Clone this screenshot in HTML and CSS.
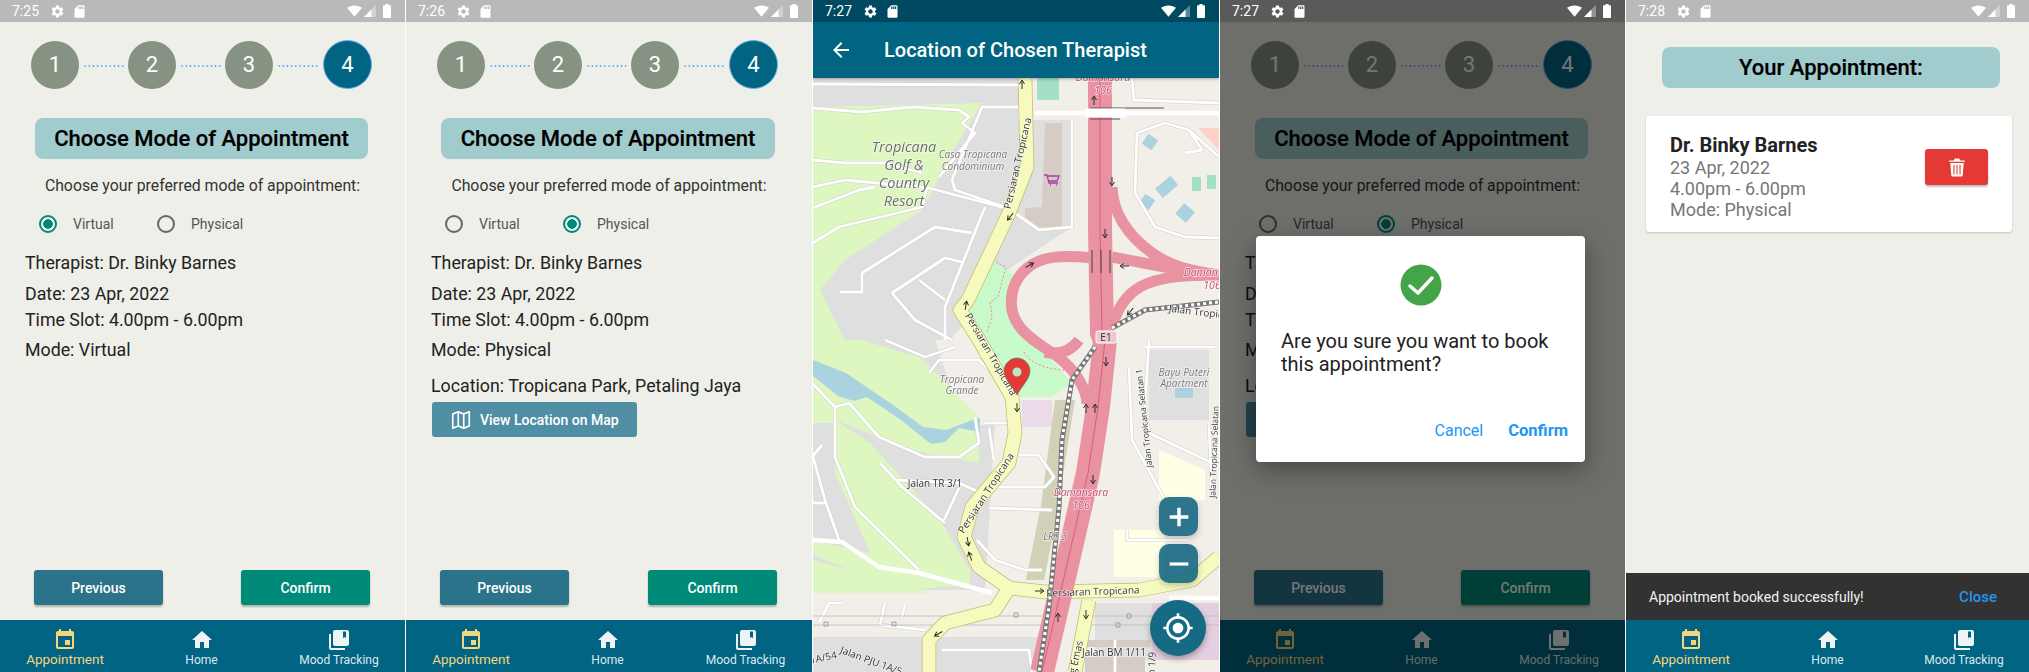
FILE: index.html
```html
<!DOCTYPE html>
<html lang="en">
<head>
    <meta charset="UTF-8">
    <title>Appointment booking screens</title>
    <link rel="stylesheet" href="styles.css">
</head>
<body>
    <svg class="icon-defs" width="0" height="0">
        <symbol id="i-gear" viewBox="0 0 24 24"><path d="M19.14 12.94c.04-.3.06-.61.06-.94 0-.32-.02-.64-.07-.94l2.03-1.58c.18-.14.23-.41.12-.61l-1.92-3.32c-.12-.22-.37-.29-.59-.22l-2.39.96c-.5-.38-1.03-.7-1.62-.94l-.36-2.54c-.04-.24-.24-.41-.48-.41h-3.84c-.24 0-.43.17-.47.41l-.36 2.54c-.59.24-1.13.57-1.62.94l-2.39-.96c-.22-.08-.47 0-.59.22L2.74 8.87c-.12.21-.08.47.12.61l2.03 1.58c-.05.3-.09.63-.09.94s.02.64.07.94l-2.03 1.58c-.18.14-.23.41-.12.61l1.92 3.32c.12.22.37.29.59.22l2.39-.96c.5.38 1.03.7 1.62.94l.36 2.54c.05.24.24.41.48.41h3.84c.24 0 .44-.17.47-.41l.36-2.54c.59-.24 1.13-.56 1.62-.94l2.39.96c.22.08.47 0 .59-.22l1.92-3.32c.12-.22.07-.47-.12-.61l-2.01-1.58zM12 15.6c-1.98 0-3.6-1.62-3.6-3.6s1.62-3.6 3.6-3.6 3.6 1.62 3.6 3.6-1.62 3.6-3.6 3.6z"/></symbol>
        <symbol id="i-sd" viewBox="0 0 24 24"><path d="M18 2h-8L4.02 8 4 20c0 1.1.9 2 2 2h12c1.1 0 2-.9 2-2V4c0-1.1-.9-2-2-2zm-6 6h-2V4h2v4zm3 0h-2V4h2v4zm3 0h-2V4h2v4z"/></symbol>
        <symbol id="i-wifi" viewBox="0 0 16 12"><path d="M8 12 0 2.6C2 1 4.8 0 8 0s6 1 8 2.6z"/></symbol>
        <symbol id="i-signal" viewBox="0 0 12 12"><path opacity=".35" d="M12 0v12H0z"/><path d="M7.5 4.5V12H0z"/></symbol>
        <symbol id="i-battery" viewBox="0 0 8 14"><path d="M2.4 0h3.2v1.2H7c.6 0 1 .4 1 1V13c0 .6-.4 1-1 1H1c-.6 0-1-.4-1-1V2.200c0-.6.4-1 1-1h1.400z"/></symbol>
        <symbol id="i-event" viewBox="0 0 24 24"><path d="M17 12h-5v5h5v-5zM16 1v2H8V1H6v2H5c-1.110 0-1.990.9-1.990 2L3 19c0 1.100.89 2 2 2h14c1.100 0 2-.9 2-2V5c0-1.100-.9-2-2-2h-1V1h-2zm3 18H5V8h14v11z"/></symbol>
        <symbol id="i-home" viewBox="0 0 24 24"><path d="M10 20v-6h4v6h5v-8h3L12 3 2 12h3v8z"/></symbol>
        <symbol id="i-book" viewBox="0 0 24 24"><path d="M4 6H2v14c0 1.100.9 2 2 2h14v-2H4V6z"/><path fill-rule="evenodd" d="M20 2H8c-1.100 0-2 .9-2 2v12c0 1.100.9 2 2 2h12c1.100 0 2-.9 2-2V4c0-1.100-.9-2-2-2zM19 3.500v6.500l-1.500-1.100-1.500 1.100V3.500z"/></symbol>
        <symbol id="i-map" viewBox="0 0 24 24"><path fill="none" stroke="currentColor" stroke-width="1.800" stroke-linejoin="round" d="M3 5.500 9 3l6 2.500L21 3v15.500L15 21l-6-2.500L3 21zM9 3v15.500M15 5.500V21"/></symbol>
    </svg>

    <div class="board">

        <!-- virtual mode -->
        <div class="screen">
            <div class="status-bar">
                <span class="clock">7:25</span>
                <svg class="st-icon st-gear"><use href="#i-gear"/></svg>
                <svg class="st-icon st-sd"><use href="#i-sd"/></svg>
                <span class="st-right">
                    <svg class="st-wifi"><use href="#i-wifi"/></svg>
                    <svg class="st-signal"><use href="#i-signal"/></svg>
                    <svg class="st-battery"><use href="#i-battery"/></svg>
                </span>
            </div>
            <div class="content">
                <div class="stepper">
                    <span class="step">1</span><span class="dots"></span>
                    <span class="step">2</span><span class="dots"></span>
                    <span class="step">3</span><span class="dots"></span>
                    <span class="step step-active">4</span>
                </div>
                <h2 class="pill">Choose Mode of Appointment</h2>
                <p class="prompt">Choose your preferred mode of appointment:</p>
                <div class="radios">
                    <div class="radio-item"><span class="radio radio-on"></span>Virtual</div>
                    <div class="radio-item"><span class="radio"></span>Physical</div>
                </div>
                <div class="details">
                    <p class="d-therapist">Therapist: Dr. Binky Barnes</p>
                    <p class="d-date">Date: 23 Apr, 2022</p>
                    <p class="d-time">Time Slot: 4.00pm - 6.00pm</p>
                    <p class="d-mode">Mode: Virtual</p>
                </div>
                <div class="actions">
                    <button class="btn btn-prev">Previous</button>
                    <button class="btn btn-confirm">Confirm</button>
                </div>
            </div>
            <div class="tabbar">
                <div class="tab tab-active"><svg><use href="#i-event"/></svg><span>Appointment</span></div>
                <div class="tab"><svg><use href="#i-home"/></svg><span>Home</span></div>
                <div class="tab"><svg><use href="#i-book"/></svg><span>Mood Tracking</span></div>
            </div>
        </div>

        <!-- physical mode -->
        <div class="screen">
            <div class="status-bar">
                <span class="clock">7:26</span>
                <svg class="st-icon st-gear"><use href="#i-gear"/></svg>
                <svg class="st-icon st-sd"><use href="#i-sd"/></svg>
                <span class="st-right">
                    <svg class="st-wifi"><use href="#i-wifi"/></svg>
                    <svg class="st-signal"><use href="#i-signal"/></svg>
                    <svg class="st-battery"><use href="#i-battery"/></svg>
                </span>
            </div>
            <div class="content">
                <div class="stepper">
                    <span class="step">1</span><span class="dots"></span>
                    <span class="step">2</span><span class="dots"></span>
                    <span class="step">3</span><span class="dots"></span>
                    <span class="step step-active">4</span>
                </div>
                <h2 class="pill">Choose Mode of Appointment</h2>
                <p class="prompt">Choose your preferred mode of appointment:</p>
                <div class="radios">
                    <div class="radio-item"><span class="radio"></span>Virtual</div>
                    <div class="radio-item"><span class="radio radio-on"></span>Physical</div>
                </div>
                <div class="details">
                    <p class="d-therapist">Therapist: Dr. Binky Barnes</p>
                    <p class="d-date">Date: 23 Apr, 2022</p>
                    <p class="d-time">Time Slot: 4.00pm - 6.00pm</p>
                    <p class="d-mode">Mode: Physical</p>
                    <p class="d-location">Location: Tropicana Park, Petaling Jaya</p>
                    <button class="btn btn-map"><svg><use href="#i-map"/></svg>View Location on Map</button>
                </div>
                <div class="actions">
                    <button class="btn btn-prev">Previous</button>
                    <button class="btn btn-confirm">Confirm</button>
                </div>
            </div>
            <div class="tabbar">
                <div class="tab tab-active"><svg><use href="#i-event"/></svg><span>Appointment</span></div>
                <div class="tab"><svg><use href="#i-home"/></svg><span>Home</span></div>
                <div class="tab"><svg><use href="#i-book"/></svg><span>Mood Tracking</span></div>
            </div>
        </div>

        <!-- map -->
        <div class="screen">
            <div class="status-bar status-dark">
                <span class="clock">7:27</span>
                <svg class="st-icon st-gear"><use href="#i-gear"/></svg>
                <svg class="st-icon st-sd"><use href="#i-sd"/></svg>
                <span class="st-right">
                    <svg class="st-wifi"><use href="#i-wifi"/></svg>
                    <svg class="st-signal"><use href="#i-signal"/></svg>
                    <svg class="st-battery"><use href="#i-battery"/></svg>
                </span>
            </div>
            <div class="appbar">
                <svg viewBox="0 0 24 24" class="back"><path d="M20 11H7.830l5.590-5.590L12 4l-8 8 8 8 1.410-1.410L7.830 13H20v-2z"/></svg>
                <span>Location of Chosen Therapist</span>
            </div>
            <div class="map-wrap">
                <svg class="map" viewBox="813 78 406 594" preserveAspectRatio="none">
                    <defs>
                        <g id="minor-roads">
                            <path d="M813 84 1019 85M813 108l49 4 50-5 47 3 10 7-7 6 13 10-36 44M813 160l32 3h40l37 10M813 187l32-7 84 8 76 20M813 208l46-18 16-3M813 243l26-16 83-20 5-19M952 180l30-73h37l1 16M952 180l3 10 50 17"/>
                            <path d="M862 293v-20l73-46 37 6M985 207l-40 100v33M892 293l53-35 17 4M892 293l23 27 37 20M919 280l26 20M840 292h22M1015 213l24 17 33-3V120"/>
                            <path d="M1137 133l28-10 24 7 30 27M1137 133l-2 60 20 34 30 10 34 1M1189 130l13 20-17 3M1132 78l2 22 85 3"/>
                            <path d="M812 383l23 24 14-4 30 34 46 20h34l20-14-4-26M885 340l40 17 30-10M929 373l10-13h40l23 23M985 423h24M989 428l5 32M880 463l22 24 43 36M895 480l64 3 20 9M959 488l-15 32"/>
                            <path d="M989 487h56l9-10-15-22h-20M989 508l63 2M977 540l18 20 30 10h17M812 453l13 47 14 40M835 407v50l20 50 64 63M812 503h13M812 457l10-12"/>
                            <path d="M1149 340l-4 67 4 26 63 30M1129 367l3 73 33 60M1209 423l3 74M1127 530v10h62M1145 347h70M942 650h87l3 22M819 623l10-20h13M885 603l-5 22 45 5M905 605l-3 12M1115 640v32"/>
                        </g>
                        <g id="ramps">
                            <path d="M1092 258c-30-3-48-2-62 8-14 10-21 26-18 44 3 16 16 27 33 38 14 9 26 18 34 32 6 10 8 18 8 24"/>
                            <path d="M1112 257l53 10 54 8M1112 187c1 28 18 50 40 66 20 14 40 18 67 22M1112 327c5-18 14-32 28-40 20-11 48-12 79-12M1045 352c14 3 26-1 34-12"/>
                        </g>
                        <path id="motorway" d="M1100 78v150l2 105 3 7-7 67-10 66-23 100-23 99"/>
                        <path id="trunk" d="M1025 78l2 89-18 46-41 87-8 10 19 30 33 57 3 36-6 30-37 44-8 30 15 30 30 21 36 4 94-2 53-10 27-23"/>
                        <path id="trunk-sw" d="M1009 588l-14 22-50 13-16 17v32M1089 600l-14 72"/>
                        <path id="rail" d="M1112 328l33-18 74-8M1095 347l-23 33-10 60-3 67-10 100-10 65"/>
                        <path id="arrow" d="M-5 0H3M0-2.500 4 0 0 2.500"/>
                    </defs>

                    <rect class="m-land" x="813" y="78" width="406" height="594"/>
                    <path class="m-grey" d="M813 78h214l3 42h42v107l-62 41-25 32-35 40-15 0 20 60v25h40l-10 165H813z"/>
                    <rect class="m-land" x="813" y="598" width="190" height="39"/>
                    <path class="m-grey" d="M813 637h229l-10 35H813zM1095 603h124v57h-124zM1149 350h60v70h-60z"/>
                    <path class="m-golf" d="M813 107l169-4-23 37-37 70-77 50-25 30 25 50-33 0zM813 340h47l60 17 59 60v46l-109-20 70 77 30 50v15l-70 5-87-35zM813 560l122 33H813z"/>
                    <path class="m-grey" d="M813 423h22v50l35 80-57-12zM835 420l44 17 46 20 54 6-109-20-35-23z"/>
                    <path class="m-park" d="M994 262l21 13-3 35 8 25 25 17 27 31-20 14h-37l-40-67-10-20z"/>
                    <path class="m-water" d="M813 360l33 13 50 34 27 20 23 3 29-11 5-1v14l-21-4-14 14-14 2-30-24-34-23-13 4-16-5-25-20z"/>
                    <rect class="m-lilac" x="1022" y="400" width="30" height="27"/>
                    <rect class="m-lilac m-lilac-2" x="1152" y="603" width="67" height="57"/>
                    <path class="m-rail-strip" d="M1055 400h20l-8 50-15 90-8 40h-18l15-75z"/>
                    <path class="m-yellow-lot" d="M1159 450l46 20v30h-46zM1114 530h51v47h-51z"/>
                    <rect class="m-mint" x="1037" y="78" width="22" height="22"/>
                    <path class="m-bldg" d="M1045 123h17v105l-23-1-14-10v-9l17-1z"/>
                    <path class="m-bldg" d="M1085 640h65v7h-65zM1085 657h60v15h-60z"/>
                    <rect class="m-water" x="1144" y="136" width="12" height="12" transform="rotate(35 1150 142)"/>
                    <rect class="m-water" x="1157" y="180" width="20" height="12" transform="rotate(-40 1168 187)"/>
                    <rect class="m-water" x="1141" y="196" width="12" height="12" transform="rotate(35 1147 202)"/>
                    <rect class="m-water" x="1178" y="206" width="14" height="14" transform="rotate(40 1185 213)"/>
                    <rect class="m-water" x="1175" y="388" width="18" height="10"/>
                    <rect class="m-mint" x="1192" y="177" width="9" height="14"/>
                    <rect class="m-mint" x="1207" y="175" width="9" height="14"/>
                    <path class="m-rose" d="M1198 128h21v22z"/>
                    <path class="m-dash-park" d="M996 262l10 5-8 30-8 5 2 15-5 15M1024 352c5 10 20 17 40 18-2-10-10-20-22-26"/>

                    <use href="#minor-roads" class="m-minor-case"/>
                    <use href="#minor-roads" class="m-minor"/>
                    <path class="m-wide" d="M812 540l30 2 37 25 40 6 73 20M1169 598h50M1035 113h184"/>
                    <path class="m-pline" d="M813 616h240M813 625h240M1080 616h139M1080 625h139"/>
                    <path class="m-pole" d="M824 622h4v4h-4zM892 622h4v4h-4zM1014 613h4v4h-4zM1127 614h4v4h-4zM1116 623h4v4h-4z"/>

                    <use href="#trunk" class="m-trunk-case"/>
                    <use href="#trunk-sw" class="m-trunk-case"/>
                    <use href="#trunk" class="m-trunk"/>
                    <use href="#trunk-sw" class="m-trunk"/>
                    <use href="#ramps" class="m-ramp"/>
                    <use href="#motorway" class="m-motor"/>
                    <use href="#motorway" class="m-motor-line"/>
                    <use href="#rail" class="m-rail"/>
                    <use href="#rail" class="m-rail-ties"/>
                    <path class="m-bridge" d="M1090 108h74M1090 119h30M1092 250v23M1101 250v23M1110 250v23"/>
                    <path class="m-wide m-wide-over" d="M1085 113h40"/>

                    <g class="m-arrows">
                        <use href="#arrow" transform="translate(1022 84) rotate(-90)"/>
                        <use href="#arrow" transform="translate(1094 100) rotate(-90)"/>
                        <use href="#arrow" transform="translate(1112 182) rotate(90)"/>
                        <use href="#arrow" transform="translate(1105 234) rotate(90)"/>
                        <use href="#arrow" transform="translate(1124 266) rotate(180)"/>
                        <use href="#arrow" transform="translate(1030 265) rotate(-30)"/>
                        <use href="#arrow" transform="translate(1010 217) rotate(130)"/>
                        <use href="#arrow" transform="translate(966 305) rotate(-80)"/>
                        <use href="#arrow" transform="translate(1130 312) rotate(130)"/>
                        <use href="#arrow" transform="translate(1106 362) rotate(90)"/>
                        <use href="#arrow" transform="translate(1086 408) rotate(-90)"/>
                        <use href="#arrow" transform="translate(1095 408) rotate(-90)"/>
                        <use href="#arrow" transform="translate(1093 480) rotate(90)"/>
                        <use href="#arrow" transform="translate(1017 408) rotate(90)"/>
                        <use href="#arrow" transform="translate(968 542) rotate(80)"/>
                        <use href="#arrow" transform="translate(970 556) rotate(-110)"/>
                        <use href="#arrow" transform="translate(1040 591)"/>
                        <use href="#arrow" transform="translate(1058 617) rotate(-90)"/>
                        <use href="#arrow" transform="translate(1086 615) rotate(90)"/>
                        <use href="#arrow" transform="translate(938 634) rotate(150)"/>
                    </g>
                    <path class="m-cart" d="M1044 175h3l2 8h9M1048 176h11l-2 5h-8M1050 185h1M1056 185h1"/>

                    <text class="m-name m-big" x="904" y="152">Tropicana</text>
                    <text class="m-name m-big" x="904" y="170">Golf &amp;</text>
                    <text class="m-name m-big" x="904" y="188">Country</text>
                    <text class="m-name m-big" x="904" y="206">Resort</text>
                    <text class="m-name" x="973" y="158">Casa Tropicana</text>
                    <text class="m-name" x="973" y="170">Condominium</text>
                    <text class="m-name" x="962" y="383">Tropicana</text>
                    <text class="m-name" x="962" y="394">Grande</text>
                    <text class="m-name" x="1184" y="376">Bayu Puteri</text>
                    <text class="m-name" x="1184" y="387">Apartment</text>
                    <text class="m-name" x="1055" y="540">LRT 3</text>
                    <text class="m-motor-name" x="1103" y="81">Damansara</text>
                    <text class="m-motor-name" x="1103" y="94">106</text>
                    <text class="m-motor-name" x="1211" y="276">Damansara</text>
                    <text class="m-motor-name" x="1212" y="289">106</text>
                    <text class="m-motor-name" x="1081" y="496">Damansara</text>
                    <text class="m-motor-name" x="1081" y="509">106</text>
                    <text class="m-road" transform="translate(1021 164) rotate(-77)">Persiaran Tropicana</text>
                    <text class="m-road" transform="translate(988 356) rotate(60)">Persiaran Tropicana</text>
                    <text class="m-road" transform="translate(989 495) rotate(-57)">Persiaran Tropicana</text>
                    <text class="m-road" transform="translate(1093 595) rotate(-2)">Persiaran Tropicana</text>
                    <text class="m-road" transform="translate(1204 316) rotate(7)">Jalan Tropicana</text>
                    <text class="m-road m-road-sm" transform="translate(1147 418) rotate(-96)">Jalan Tropicana Selatan 1</text>
                    <text class="m-road m-road-sm" transform="translate(1217 452) rotate(-88)">Jalan Tropicana Selatan</text>
                    <text class="m-road" x="935" y="487">Jalan TR 3/1</text>
                    <text class="m-road" x="1114" y="656">Jalan BM 1/11</text>
                    <text class="m-road" transform="translate(1076 672) rotate(-77)">Lintang Emas</text>
                    <text class="m-road" transform="translate(824 661) rotate(-12)">1A/54</text>
                    <text class="m-road" transform="translate(870 664) rotate(20)">Jalan PJU 1A/5</text>
                    <text class="m-road" transform="translate(1155 672) rotate(-88)">Jalan 1/9</text>

                    <rect class="m-shield-fill" x="1096" y="331" width="21" height="12" rx="2"/>
                    <text class="m-shield-text" x="1106" y="341">E1</text>

                    <path class="m-pin" d="M1017 358c-7 0-13 6-13 13 0 8 9 16 13 24 4-8 13-16 13-24 0-7-6-13-13-13z"/>
                    <circle class="m-pin-hole" cx="1017" cy="372" r="4.500"/>
                </svg>
                <div class="zoom-btn zoom-plus">
                    <svg viewBox="0 0 24 24"><path d="M19 13.300h-5.700V19h-2.600v-5.700H5v-2.600h5.700V5h2.600v5.700H19z"/></svg>
                </div>
                <div class="zoom-btn zoom-minus">
                    <svg viewBox="0 0 24 24"><path d="M5 10.800h14v2.400H5z"/></svg>
                </div>
                <div class="locate">
                    <svg viewBox="0 0 24 24"><path d="M12 8c-2.210 0-4 1.790-4 4s1.790 4 4 4 4-1.790 4-4-1.790-4-4-4zm8.940 3c-.46-4.170-3.770-7.480-7.940-7.940V1h-2v2.060C6.830 3.520 3.520 6.830 3.060 11H1v2h2.060c.46 4.170 3.770 7.480 7.940 7.940V23h2v-2.060c4.170-.46 7.480-3.770 7.940-7.940H23v-2h-2.060zM12 19c-3.870 0-7-3.130-7-7s3.130-7 7-7 7 3.130 7 7-3.130 7-7 7z"/></svg>
                </div>
            </div>
        </div>

        <!-- confirm dialog -->
        <div class="screen">
            <div class="status-bar status-dim">
                <span class="clock">7:27</span>
                <svg class="st-icon st-gear"><use href="#i-gear"/></svg>
                <svg class="st-icon st-sd"><use href="#i-sd"/></svg>
                <span class="st-right">
                    <svg class="st-wifi"><use href="#i-wifi"/></svg>
                    <svg class="st-signal"><use href="#i-signal"/></svg>
                    <svg class="st-battery"><use href="#i-battery"/></svg>
                </span>
            </div>
            <div class="content">
                <div class="stepper">
                    <span class="step">1</span><span class="dots"></span>
                    <span class="step">2</span><span class="dots"></span>
                    <span class="step">3</span><span class="dots"></span>
                    <span class="step step-active">4</span>
                </div>
                <h2 class="pill">Choose Mode of Appointment</h2>
                <p class="prompt">Choose your preferred mode of appointment:</p>
                <div class="radios">
                    <div class="radio-item"><span class="radio"></span>Virtual</div>
                    <div class="radio-item"><span class="radio radio-on"></span>Physical</div>
                </div>
                <div class="details">
                    <p class="d-therapist">Therapist: Dr. Binky Barnes</p>
                    <p class="d-date">Date: 23 Apr, 2022</p>
                    <p class="d-time">Time Slot: 4.00pm - 6.00pm</p>
                    <p class="d-mode">Mode: Physical</p>
                    <p class="d-location">Location: Tropicana Park, Petaling Jaya</p>
                    <button class="btn btn-map"><svg><use href="#i-map"/></svg>View Location on Map</button>
                </div>
                <div class="actions">
                    <button class="btn btn-prev">Previous</button>
                    <button class="btn btn-confirm">Confirm</button>
                </div>
            </div>
            <div class="tabbar">
                <div class="tab tab-active"><svg><use href="#i-event"/></svg><span>Appointment</span></div>
                <div class="tab"><svg><use href="#i-home"/></svg><span>Home</span></div>
                <div class="tab"><svg><use href="#i-book"/></svg><span>Mood Tracking</span></div>
            </div>
            <div class="scrim">
                <div class="dialog">
                    <svg class="dialog-check" viewBox="0 0 42 42">
                        <circle cx="21" cy="21" r="20.500"/>
                        <path d="M10 22l8 7 14-15"/>
                    </svg>
                    <p class="dialog-text">Are you sure you want to book this appointment?</p>
                    <div class="dialog-actions">
                        <span class="dialog-cancel">Cancel</span>
                        <span class="dialog-ok">Confirm</span>
                    </div>
                </div>
            </div>
        </div>

        <!-- booked -->
        <div class="screen">
            <div class="status-bar">
                <span class="clock">7:28</span>
                <svg class="st-icon st-gear"><use href="#i-gear"/></svg>
                <svg class="st-icon st-sd"><use href="#i-sd"/></svg>
                <span class="st-right">
                    <svg class="st-wifi"><use href="#i-wifi"/></svg>
                    <svg class="st-signal"><use href="#i-signal"/></svg>
                    <svg class="st-battery"><use href="#i-battery"/></svg>
                </span>
            </div>
            <div class="content content-booked">
                <h2 class="pill pill-booked">Your Appointment:</h2>
                <div class="card">
                    <div class="card-info">
                        <div class="card-name">Dr. Binky Barnes</div>
                        <div>23 Apr, 2022</div>
                        <div>4.00pm - 6.00pm</div>
                        <div>Mode: Physical</div>
                    </div>
                    <button class="btn btn-delete">
                        <svg viewBox="0 0 18 20"><path fill-rule="evenodd" d="M6.500 0h5l1 2H17c.6 0 1 .4 1 1v.5H0V3c0-.6.4-1 1-1h4.500zM1.500 5h15l-1 13.500c0 .8-.7 1.500-1.500 1.500H4c-.8 0-1.500-.7-1.500-1.500zM5 7v11h1.200V7zM8.400 7v11h1.200V7zM11.800 7v11H13V7z"/></svg>
                    </button>
                </div>
                <div class="snackbar">
                    <span>Appointment booked successfully!</span>
                    <span class="snack-close">Close</span>
                </div>
            </div>
            <div class="tabbar">
                <div class="tab tab-active"><svg><use href="#i-event"/></svg><span>Appointment</span></div>
                <div class="tab"><svg><use href="#i-home"/></svg><span>Home</span></div>
                <div class="tab"><svg><use href="#i-book"/></svg><span>Mood Tracking</span></div>
            </div>
        </div>

    </div>
</body>
</html>
```

FILE: styles.css
```css
/* Basic styling */
html, body {
    margin: 0;
    padding: 0;
    background: #fff;
    font-family: Roboto, sans-serif;
    overflow: hidden;
}

.icon-defs {
    position: absolute;
}

.board {
    display: grid;
    grid-template-columns: 405px 406px 406px 405px 403px;
    gap: 1px;
    height: 672px;
}

.screen {
    position: relative;
    display: flex;
    flex-direction: column;
    height: 672px;
    overflow: hidden;
    background: #efefe9;
}

/* Status bar */
.status-bar {
    display: flex;
    align-items: center;
    flex: none;
    height: 22px;
    padding: 0 14px 0 12px;
    background: #b9b9b9;
    color: #fff;
    font-size: 14px;
}

.status-dark {
    background: #004a61;
}

.status-dim {
    background: #5a5a5a;
}

.clock {
    width: 38px;
}

.st-icon {
    width: 15px;
    height: 15px;
    fill: #fff;
}

.st-sd {
    margin-left: 7px;
}

.st-right {
    display: flex;
    align-items: center;
    margin-left: auto;
    fill: #fff;
}

.st-wifi {
    width: 15px;
    height: 12px;
}

.st-signal {
    width: 12px;
    height: 12px;
    margin-left: 2px;
}

.st-battery {
    width: 8px;
    height: 14px;
    margin-left: 7px;
}

/* Form */
.content {
    display: flex;
    flex-direction: column;
    flex: 1;
    min-height: 0;
}

.stepper {
    display: flex;
    align-items: center;
    padding: 18px 0 0 31px;
}

.step {
    display: flex;
    align-items: center;
    justify-content: center;
    width: 48px;
    height: 48px;
    border-radius: 50%;
    background: #869382;
    color: #fff;
    font-size: 22px;
}

.step-active {
    width: 47px;
    height: 47px;
    margin-left: 1px;
    border: 1px solid #6ab1ea;
    background: #006482;
}

.dots {
    width: 41px;
    height: 2px;
    margin: 2px 4px 0;
    background-image: radial-gradient(circle, #4da3ff 0.9px, transparent 1px);
    background-size: 4.200px 2px;
}

.pill {
    margin: 29px 37px 0 35px;
    height: 41px;
    border-radius: 8px;
    background: #a1cccd;
    color: #000;
    font-size: 22px;
    font-weight: 500;
    line-height: 42px;
    text-align: center;
    -webkit-text-stroke: 0.2px #000;
}

.prompt {
    margin: 17px 0 0;
    color: #333;
    font-size: 15.800px;
    line-height: 20px;
    text-align: center;
}

.radios {
    display: flex;
    height: 24px;
    margin-top: 16px;
    padding-left: 39px;
}

.radio-item {
    display: flex;
    align-items: center;
    width: 118px;
    color: #555;
    font-size: 14px;
}

.radio {
    box-sizing: border-box;
    width: 18px;
    height: 18px;
    margin-right: 16px;
    border: 2px solid #666;
    border-radius: 50%;
}

.radio-on {
    border-color: #00897b;
    background: radial-gradient(circle, #00897b 4.500px, transparent 5px);
}

.details {
    padding: 15px 0 0 25px;
    color: #222;
    font-size: 17.800px;
}

.details p {
    height: 24px;
    margin: 0;
    line-height: 24px;
}

.details .d-date {
    margin-top: 7px;
}

.details .d-time {
    margin-top: 2px;
}

.details .d-mode {
    margin-top: 6px;
}

.details .d-location {
    margin-top: 12px;
}

.btn {
    border: none;
    border-radius: 3px;
    color: #fff;
    font-family: Roboto, sans-serif;
    font-size: 14px;
    font-weight: 500;
    box-shadow: 0 2px 2px rgba(0, 0, 0, 0.25);
}

.btn-map {
    display: flex;
    align-items: center;
    width: 205px;
    height: 35px;
    margin: 4px 0 0 1px;
    padding: 0 0 0 18px;
    background: #508fa3;
    box-shadow: none;
}

.btn-map svg {
    width: 22px;
    height: 22px;
    margin-right: 8px;
    color: #fff;
}

.actions {
    display: flex;
    justify-content: space-between;
    margin-top: auto;
    padding: 0 35px 15px 34px;
}

.actions .btn {
    width: 129px;
    height: 35px;
}

.btn-prev {
    background: #2a738b;
}

.btn-confirm {
    background: #008a78;
}

/* Bottom tabs */
.tabbar {
    display: grid;
    grid-template-columns: 130px 143px 1fr;
    flex: none;
    height: 52px;
    background: #006482;
}

.tab {
    display: flex;
    flex-direction: column;
    align-items: center;
    padding-top: 8px;
    fill: #f0f3f4;
    color: #dfe8ec;
    font-size: 12px;
}

.tab svg {
    width: 24px;
    height: 24px;
}

.tab span {
    margin-top: 1px;
    line-height: 15px;
    white-space: nowrap;
}

.tab-active {
    fill: #f6d57e;
    color: #f6d57e;
    font-size: 13.500px;
}

.tab-active span {
    margin-top: 0;
}

/* Map screen */
.appbar {
    display: flex;
    align-items: center;
    flex: none;
    height: 56px;
    padding-left: 16px;
    background: #006482;
    color: #fff;
    font-size: 20px;
    font-weight: 500;
    box-shadow: 0 1px 3px rgba(0, 0, 0, 0.3);
    z-index: 1;
}

.back {
    width: 24px;
    height: 24px;
    margin-right: 31px;
    fill: #fff;
}

.map-wrap {
    position: relative;
    flex: 1;
    min-height: 0;
}

.map {
    display: block;
    width: 406px;
    height: 594px;
    filter: blur(0.35px);
}

.m-land { fill: #f2efe9; }
.m-grey { fill: #e0dfdf; }
.m-golf { fill: #def6c0; }
.m-park { fill: #c8facc; }
.m-water { fill: #aad3df; }
.m-lilac { fill: #ebdbe8; }
.m-lilac-2 { fill: #e3cfe0; }
.m-rail-strip { fill: #d1d1b8; }
.m-yellow-lot { fill: #ffffe5; }
.m-mint { fill: #a3e0c6; }
.m-bldg { fill: #d6ccc6; }
.m-rose { fill: #fdd0c8; }

.m-dash-park {
    fill: none;
    stroke: #f08c8c;
    stroke-width: 1;
    stroke-dasharray: 2 2;
}

.m-minor, .m-minor-case, .m-wide, .m-pline, .m-pole, .m-trunk, .m-trunk-case,
.m-ramp, .m-motor, .m-motor-line, .m-rail, .m-rail-ties, .m-bridge {
    fill: none;
    stroke-linejoin: round;
}

.m-minor { stroke: #fff; stroke-width: 2.800; }
.m-minor-case { stroke: #cfcdca; stroke-width: 3.800; }
.m-wide { stroke: #fff; stroke-width: 4.500; }
.m-wide-over { stroke-width: 9; }
.m-pline { stroke: #b5b5b5; stroke-width: 0.700; }
.m-pole { stroke: #8f8f8f; stroke-width: 0.800; }
.m-trunk { stroke: #f7fabf; stroke-width: 13; }
.m-trunk-case { stroke: #bdbf72; stroke-width: 14.500; }
.m-ramp { stroke: #e892a2; stroke-width: 11; }
.m-motor { stroke: #e892a2; stroke-width: 24; }
.m-motor-line { stroke: #dc5c7a; stroke-width: 1; }
.m-rail { stroke: #777; stroke-width: 5; }
.m-rail-ties { stroke: #fff; stroke-width: 3; stroke-dasharray: 3 3; }
.m-bridge { stroke: #555; stroke-width: 1.200; }

.m-arrows {
    fill: none;
    stroke: #2b2b2b;
    stroke-width: 1;
}

.m-cart {
    fill: none;
    stroke: #ac39ac;
    stroke-width: 1.300;
}

.m-shield-fill { fill: #eec8d0; stroke: #fff; }

.m-shield-text {
    fill: #333;
    font-family: "Open Sans", sans-serif;
    font-size: 10px;
    text-anchor: middle;
}

.m-name {
    fill: #7a7a7a;
    font-family: "Open Sans", sans-serif;
    font-size: 10px;
    font-style: italic;
    text-anchor: middle;
    paint-order: stroke;
    stroke: rgba(255, 255, 255, 0.6);
    stroke-width: 1.500px;
}

.m-big {
    fill: #6e6e6e;
    font-size: 14.500px;
}

.m-motor-name {
    fill: #c24e6c;
    font-family: "Open Sans", sans-serif;
    font-size: 10.500px;
    font-style: italic;
    text-anchor: middle;
    paint-order: stroke;
    stroke: rgba(255, 255, 255, 0.7);
    stroke-width: 1.500px;
}

.m-road {
    fill: #333;
    font-family: "Open Sans", sans-serif;
    font-size: 10px;
    text-anchor: middle;
    paint-order: stroke;
    stroke: rgba(255, 255, 255, 0.55);
    stroke-width: 1.500px;
}

.m-road-sm {
    font-size: 8.500px;
}

.m-pin { fill: #e53935; stroke: #3f7f5a; stroke-width: 0.600; }
.m-pin-hole { fill: #b9e6c9; }

.zoom-btn {
    position: absolute;
    left: 346px;
    display: flex;
    align-items: center;
    justify-content: center;
    width: 39px;
    height: 39px;
    border-radius: 10px;
    background: rgba(0, 90, 120, 0.82);
    box-shadow: 0 3px 6px rgba(0, 0, 0, 0.2);
}

.zoom-btn svg {
    width: 32px;
    height: 32px;
    fill: #fff;
}

.zoom-plus {
    top: 419px;
}

.zoom-minus {
    top: 466px;
}

.locate {
    position: absolute;
    top: 522px;
    left: 337px;
    display: flex;
    align-items: center;
    justify-content: center;
    width: 56px;
    height: 56px;
    border-radius: 50%;
    background: #156a84;
    box-shadow: 0 3px 6px rgba(0, 0, 0, 0.3);
}

.locate svg {
    width: 32px;
    height: 32px;
    fill: #fff;
}

/* Dialog */
.scrim {
    position: absolute;
    inset: 22px 0 0;
    display: flex;
    align-items: flex-start;
    justify-content: center;
    padding-top: 214px;
    background: rgba(0, 0, 0, 0.54);
}

.dialog {
    display: flex;
    flex-direction: column;
    box-sizing: border-box;
    width: 329px;
    height: 226px;
    margin-right: 4px;
    padding: 28px 24px 0 25px;
    border-radius: 4px;
    background: #fff;
    box-shadow: 0 8px 24px rgba(0, 0, 0, 0.35);
}

.dialog-check {
    flex: none;
    align-self: center;
    width: 42px;
    height: 42px;
}

.dialog-check circle {
    fill: #43a547;
}

.dialog-check path {
    fill: none;
    stroke: #fff;
    stroke-width: 3.500;
    stroke-linecap: round;
    stroke-linejoin: round;
}

.dialog-text {
    margin: 24px 0 0;
    color: #222;
    font-size: 20px;
    line-height: 23px;
}

.dialog-actions {
    display: flex;
    justify-content: flex-end;
    gap: 25px;
    margin: auto -7px 0 0;
    padding-bottom: 21px;
    color: #2196f3;
    font-size: 16px;
    line-height: 20px;
}

.dialog-ok {
    font-size: 16.500px;
    font-weight: 700;
}

/* Booked screen */
.content-booked {
    position: relative;
}

.pill-booked {
    margin: 25px 29px 0 36px;
}

.card {
    display: flex;
    align-items: center;
    justify-content: space-between;
    box-sizing: border-box;
    height: 116px;
    margin: 28px 17px 0 20px;
    padding: 4px 24px 0;
    border-radius: 3px;
    background: #fff;
    box-shadow: 0 1px 2px rgba(0, 0, 0, 0.2);
    color: #777;
    font-size: 18px;
    line-height: 21px;
}

.card-name {
    color: #222;
    font-size: 20px;
    font-weight: 700;
    line-height: 24px;
}

.btn-delete {
    display: flex;
    align-items: center;
    justify-content: center;
    width: 63px;
    height: 36px;
    margin-top: -18px;
    background: #e53935;
}

.btn-delete svg {
    width: 16px;
    height: 19px;
    fill: #fff;
}

.snackbar {
    position: absolute;
    right: 0;
    bottom: 0;
    left: 0;
    display: flex;
    align-items: center;
    justify-content: space-between;
    box-sizing: border-box;
    height: 47px;
    padding: 1px 32px 0 23px;
    background: #323232;
    color: #f2f2f2;
    font-size: 14px;
}

.snack-close {
    color: #2196f3;
    font-size: 15px;
    font-weight: 500;
}
```
